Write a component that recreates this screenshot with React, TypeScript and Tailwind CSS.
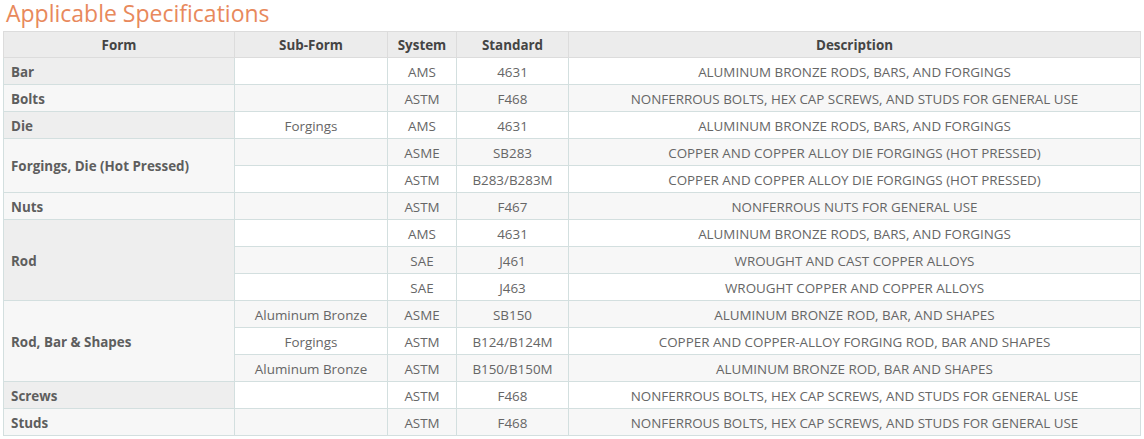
const rows: { form?: string; span?: number; sub: string; sys: string; std: string; desc: string }[] = [
  { form: "Bar", span: 1, sub: "", sys: "AMS", std: "4631", desc: "ALUMINUM BRONZE RODS, BARS, AND FORGINGS" },
  { form: "Bolts", span: 1, sub: "", sys: "ASTM", std: "F468", desc: "NONFERROUS BOLTS, HEX CAP SCREWS, AND STUDS FOR GENERAL USE" },
  { form: "Die", span: 1, sub: "Forgings", sys: "AMS", std: "4631", desc: "ALUMINUM BRONZE RODS, BARS, AND FORGINGS" },
  { form: "Forgings, Die (Hot Pressed)", span: 2, sub: "", sys: "ASME", std: "SB283", desc: "COPPER AND COPPER ALLOY DIE FORGINGS (HOT PRESSED)" },
  { sub: "", sys: "ASTM", std: "B283/B283M", desc: "COPPER AND COPPER ALLOY DIE FORGINGS (HOT PRESSED)" },
  { form: "Nuts", span: 1, sub: "", sys: "ASTM", std: "F467", desc: "NONFERROUS NUTS FOR GENERAL USE" },
  { form: "Rod", span: 3, sub: "", sys: "AMS", std: "4631", desc: "ALUMINUM BRONZE RODS, BARS, AND FORGINGS" },
  { sub: "", sys: "SAE", std: "J461", desc: "WROUGHT AND CAST COPPER ALLOYS" },
  { sub: "", sys: "SAE", std: "J463", desc: "WROUGHT COPPER AND COPPER ALLOYS" },
  { form: "Rod, Bar & Shapes", span: 3, sub: "Aluminum Bronze", sys: "ASME", std: "SB150", desc: "ALUMINUM BRONZE ROD, BAR, AND SHAPES" },
  { sub: "Forgings", sys: "ASTM", std: "B124/B124M", desc: "COPPER AND COPPER-ALLOY FORGING ROD, BAR AND SHAPES" },
  { sub: "Aluminum Bronze", sys: "ASTM", std: "B150/B150M", desc: "ALUMINUM BRONZE ROD, BAR AND SHAPES" },
  { form: "Screws", span: 1, sub: "", sys: "ASTM", std: "F468", desc: "NONFERROUS BOLTS, HEX CAP SCREWS, AND STUDS FOR GENERAL USE" },
  { form: "Studs", span: 1, sub: "", sys: "ASTM", std: "F468", desc: "NONFERROUS BOLTS, HEX CAP SCREWS, AND STUDS FOR GENERAL USE" },
];

export default function App() {
  const td = "border border-[#d3dfdf] h-[27px] p-0 pt-[2px] text-center";
  return (
    <div className="w-[1144px] h-[439px] bg-white px-[3px] overflow-hidden" style={{ fontFamily: '"Open Sans", sans-serif' }}>
      <h2 className="text-[23px] leading-[26px] text-[#e8895c] pl-[3px] h-[31px]">Applicable Specifications</h2>
      <table className="w-[1138px] border-collapse text-[13.4px] text-[#666]" style={{ tableLayout: "fixed" }}>
        <colgroup>
          <col style={{ width: 231 }} />
          <col style={{ width: 153 }} />
          <col style={{ width: 69 }} />
          <col style={{ width: 112 }} />
          <col />
        </colgroup>
        <thead>
          <tr className="bg-[#ececec] text-[#444] font-bold">
            <th className="border border-[#dcdcdc] h-[26px] pt-[1px]">Form</th>
            <th className="border border-[#dcdcdc] pt-[1px]">Sub-Form</th>
            <th className="border border-[#dcdcdc] pt-[1px]">System</th>
            <th className="border border-[#dcdcdc] pt-[1px]">Standard</th>
            <th className="border border-[#dcdcdc] pt-[1px]">Description</th>
          </tr>
        </thead>
        <tbody>
          {rows.map((r, i) => {
            const even = i % 2 === 1;
            return (
              <tr key={i} className={even ? "bg-[#f7f7f7]" : "bg-white"}>
                {r.form !== undefined && (
                  <td rowSpan={r.span} className={`border border-[#d3dfdf] text-left pl-[7px] pt-[2px] font-bold text-[#5e5e5e] ${even ? "bg-[#f7f7f7]" : "bg-[#eeeeee]"}`}>
                    {r.form}
                  </td>
                )}
                <td className={td}>{r.sub}</td>
                <td className={td}>{r.sys}</td>
                <td className={td}>{r.std}</td>
                <td className={td}>{r.desc}</td>
              </tr>
            );
          })}
        </tbody>
      </table>
    </div>
  );
}
